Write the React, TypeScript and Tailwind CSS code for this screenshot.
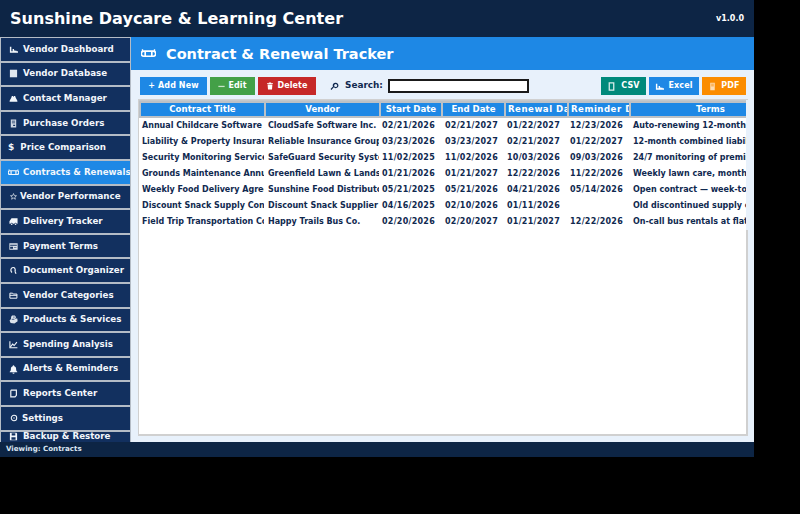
import type { ReactNode } from "react";

function Svg({ w = 9, h = 9, c = "", children }: { w?: number; h?: number; c?: string; children: ReactNode }) {
  return (
    <svg viewBox="0 0 10 10" width={w} height={h} className={`shrink-0 ${c}`} fill="currentColor" stroke="none">
      {children}
    </svg>
  );
}

const Chart = (p: { w?: number; h?: number }) => (
  <Svg {...p}><path d="M1 2h1.6v5H4V4.5h1.6V6H7V6.5h1.5V7H10v1.6H1z" /></Svg>
);
const Square = () => (
  <Svg><rect x="1" y="0.8" width="8" height="8.4" opacity="0.92" /></Svg>
);
const People = () => (
  <Svg><path d="M3.2 2.2h1.2l.6 1 .6-1h1.2l.7 2 1.8 3.3V8.6H.7V7.500L2.500 4.2z" /></Svg>
);
const Receipt = () => (
  <Svg><path fillRule="evenodd" opacity="0.85" d="M2 .5h6v9H2zM3.200 2v.8h3.600V2zM3.200 4v.8h3.600V4zM4.600 6.400v1.400h2.200V6.400z" /></Svg>
);
const Scroll = ({ w = 10, h = 10 }: { w?: number; h?: number }) => (
  <Svg w={w} h={h}>
    <path fill="none" stroke="currentColor" strokeWidth="1.100" d="M1.900 3.400h6.200a1.500 1.500 0 0 1 0 3.400H1.900a1.500 1.500 0 0 1 0-3.400zM2.800 3.400v3.400M7.200 3.400v3.400" />
    <path fill="none" stroke="currentColor" strokeWidth="0.900" d="M1 3.400V2.200M9 3.400V2.200" />
  </Svg>
);
const Star = () => (
  <Svg w={7} h={7}><path fill="none" stroke="currentColor" strokeWidth="1.100" opacity="0.85" d="M5 .8l1.200 2.900 3.100.2-2.400 2 .8 3L5 7.300 2.300 8.900l.8-3-2.400-2 3.100-.2z" /></Svg>
);
const Truck = () => (
  <Svg><path d="M2.800 1.500H9.500v6H8.500a1.200 1.200 0 0 0-2.400 0H4.200a1.200 1.200 0 0 0-2.400 0H.5V4.800z" /><circle cx="3" cy="8" r="0.9" /><circle cx="7.300" cy="8" r="0.9" /></Svg>
);
const Card = () => (
  <Svg><path fillRule="evenodd" opacity="0.9" d="M.4 1.500h9.200v7H.4zM1.300 3v1.200h7.400V3zM1.300 5.300v2.300h3.200V5.300zM5.500 6v.8h2.800V6z" /></Svg>
);
const Clip = () => (
  <Svg><path fill="none" stroke="currentColor" strokeWidth="1.300" d="M3.300 7.200C1.800 5.700 1.700 3.600 2.900 2.400c1.100-1.100 2.800-.9 3.600.3.700 1.200.6 2.500 0 3.200M6.600 5.900L7.800 8.500" /></Svg>
);
const Folder = () => (
  <Svg><path fill="none" stroke="currentColor" strokeWidth="1.100" d="M1 2.400h3l.8 1h4v4.600H1zM1 4.800h8" /></Svg>
);
const Box = () => (
  <Svg><path d="M3.400.6h3L8 2.500 6.400 4h2.800L9.600 7 6 9.400 1.800 9 .6 6.200 2.200 4.400 2.400 2z" opacity="0.9" /><path d="M3 4.800h3" stroke="#12305f" strokeWidth="0.800" /><path d="M5.500 1.500v2" stroke="#12305f" strokeWidth="0.700" /></Svg>
);
const Trend = () => (
  <Svg><path fill="none" stroke="currentColor" strokeWidth="1.200" d="M1 1.500V8.600H9.300M1.800 7.500L4 4.600l1.700 1.500L8.800 2.300" /></Svg>
);
const Bell = () => (
  <Svg><path d="M5 .4c.6 0 .9.400.9 1 1.500.4 2 1.600 2 3 0 1.500.5 2.400 1.300 3.100V8H.8v-.5C1.600 6.800 2.100 5.900 2.100 4.400c0-1.400.500-2.600 2-3 0-.6.300-1 .9-1zM3.800 8.500h2.400A1.200 1.200 0 0 1 3.800 8.500z" /></Svg>
);
const Report = () => (
  <Svg><path fill="none" stroke="currentColor" strokeWidth="1.300" d="M2 1.300h6.200v1.400M2 1.300v7.400h4.700L8.200 7V2.800" /></Svg>
);
const Gear = () => (
  <Svg w={8} h={8}><circle cx="5" cy="5" r="3.400" fill="none" stroke="currentColor" strokeWidth="1.300" /><circle cx="5" cy="5" r="1" opacity="0.8" /></Svg>
);
const Floppy = () => (
  <Svg><path fillRule="evenodd" d="M1 .8h7.200L9 1.600v7.600H1zM3 1.500v2.500h4V1.500zM2.700 5.800v2.800h4.600V5.800z" /></Svg>
);
const Lens = () => (
  <Svg w={9} h={9}><path fillRule="evenodd" d="M6.300.8a3 3 0 1 1-2.100 5.100L1.600 8.800.6 7.900 3.300 5A3 3 0 0 1 6.300.8zm0 1.300a1.700 1.700 0 1 0 0 3.400 1.700 1.700 0 0 0 0-3.400z" /></Svg>
);
const Trash = () => (
  <Svg w={8} h={8}><path d="M3.700.6h2.600l.4.900h2v1H1.300v-1h2zM2 3.200h6l-.5 6.200H2.500z" /></Svg>
);
const Minus = () => (
  <Svg w={7} h={7}><path d="M.5 4h9v1.800h-9z" opacity="0.7" /></Svg>
);
const Doc = () => (
  <Svg><path fill="none" stroke="currentColor" strokeWidth="1.400" opacity="0.85" d="M2.500 1h5v8h-5z" /></Svg>
);
const Pdf = () => (
  <Svg><path fillRule="evenodd" opacity="0.7" d="M2.500.7h5v8.600h-5zM3.500 2v.8h3V2zM3.500 4v.8h3V4z" /></Svg>
);

const nav: [ReactNode, string][] = [
  [<Chart />, "Vendor Dashboard"],
  [<Square />, "Vendor Database"],
  [<People />, "Contact Manager"],
  [<Receipt />, "Purchase Orders"],
  [null, "Price Comparison"],
  [<Scroll w={11} h={11} />, "Contracts & Renewals"],
  [<Star />, "Vendor Performance"],
  [<Truck />, "Delivery Tracker"],
  [<Card />, "Payment Terms"],
  [<Clip />, "Document Organizer"],
  [<Folder />, "Vendor Categories"],
  [<Box />, "Products & Services"],
  [<Trend />, "Spending Analysis"],
  [<Bell />, "Alerts & Reminders"],
  [<Report />, "Reports Center"],
  [<Gear />, "Settings"],
  [<Floppy />, "Backup & Restore"],
];

const rows = [
  ["Annual Childcare Software", "CloudSafe Software Inc.", "02/21/2026", "02/21/2027", "01/22/2027", "12/23/2026", "Auto-renewing 12-month subscription"],
  ["Liability & Property Insurance", "Reliable Insurance Group", "03/23/2026", "03/23/2027", "02/21/2027", "01/22/2027", "12-month combined liability policy"],
  ["Security Monitoring Service", "SafeGuard Security Systems", "11/02/2025", "11/02/2026", "10/03/2026", "09/03/2026", "24/7 monitoring of premises"],
  ["Grounds Maintenance Annual", "Greenfield Lawn & Landscaping", "01/21/2026", "01/21/2027", "12/22/2026", "11/22/2026", "Weekly lawn care, monthly trim"],
  ["Weekly Food Delivery Agreement", "Sunshine Food Distributors", "05/21/2025", "05/21/2026", "04/21/2026", "05/14/2026", "Open contract — week-to-week"],
  ["Discount Snack Supply Contract", "Discount Snack Supplier", "04/16/2025", "02/10/2026", "01/11/2026", "", "Old discontinued supply contract"],
  ["Field Trip Transportation Contract", "Happy Trails Bus Co.", "02/20/2026", "02/20/2027", "01/21/2027", "12/22/2026", "On-call bus rentals at flat rate"],
];

const cols = [
  ["Contract Title", 127, 3],
  ["Vendor", 115, 2],
  ["Start Date", 62, 1],
  ["End Date", 63, 2],
  ["Renewal Date", 63, 1],
  ["Reminder Date", 62, 1],
  ["Terms", 161, 2],
] as const;

const btn = "h-full flex items-center justify-center gap-[3px] text-[8px] tracking-[0.1px]";

export default function App() {
  return (
    <div className="min-h-screen bg-black">
      <div className="w-[754px] h-[457px] flex flex-col bg-[#e8f1fb] font-['DejaVu_Sans',sans-serif] font-bold overflow-hidden">
        <header className="h-[37px] shrink-0 bg-[#0d2545] text-white flex items-center justify-between px-[10px]">
          <span className="text-[16px] tracking-[0.03px]">Sunshine Daycare &amp; Learning Center</span>
          <span className="text-[8px]">v1.0.0</span>
        </header>
        <div className="flex-1 flex min-h-0">
          <nav className="w-[131px] shrink-0 flex flex-col overflow-hidden">
            {nav.map(([icon, label], i) => (
              <div
                key={label}
                className={`${i === 16 ? "h-[12px]" : "h-[24.6px]"} shrink-0 flex items-center border border-[#b4bcc6] whitespace-nowrap text-[8.7px] text-[#f2f6fb] overflow-hidden ${i === 5 ? "bg-[#1e88e5]" : "bg-[#12305f]"}`}
              >
                {icon === null ? (
                  <span className="ml-[7px] mr-[6px] text-[9px]">$</span>
                ) : (
                  <span className="w-[22px] flex justify-center pl-[3px] shrink-0">{icon}</span>
                )}
                <span className={i === 6 ? "-ml-[3px]" : i === 15 ? "-ml-[1px]" : ""}>{label}</span>
              </div>
            ))}
          </nav>
          <main className="flex-1 min-w-0 flex flex-col">
            <div className="h-[33px] shrink-0 bg-[#1e88e5] text-white flex items-center pl-[10px] text-[14.5px]">
              <span className="w-[25px] flex"><Scroll w={15} h={15} /></span>
              <span className="translate-y-[0.5px]">Contract &amp; Renewal Tracker</span>
            </div>
            <div className="flex items-center h-[18px] mt-[7px] ml-[9px] mr-[8px] text-white">
              <div className={`${btn} w-[67px] mr-[3px] bg-[#1e88e5]`}>+ Add New</div>
              <div className={`${btn} w-[45px] mr-[3px] bg-[#43a047]`}><Minus /> Edit</div>
              <div className={`${btn} w-[58px] bg-[#c62828]`}><Trash /> Delete</div>
              <span className="ml-[14px] text-[#10294f]"><Lens /></span>
              <span className="ml-[6px] text-[#10294f] text-[8.9px]">Search:</span>
              <div className="ml-[5px] w-[141px] h-[14px] bg-white border-2 border-[#1a1a1a]" />
              <div className={`${btn} ml-auto gap-[5px] w-[45px] mr-[3px] bg-[#00897b]`}><Doc /> CSV</div>
              <div className={`${btn} gap-[4px] w-[50px] mr-[3px] bg-[#1e88e5]`}><Chart /> Excel</div>
              <div className={`${btn} gap-[4px] w-[44px] bg-[#fb8c00]`}><Pdf /> PDF</div>
            </div>
            <div className="mt-[4px] ml-[7px] w-[610px] h-[337px] bg-white border-l border-t border-r-2 border-b-2 border-[#d0d0d0]">
              <div className="-mr-[2px] h-[130px] border-r-2 border-[#e8f1fb] overflow-hidden bg-white">
                <div className="flex w-[700px] border-t border-[#c4c8cc]">
                  {cols.map(([name, w], i) => (
                    <div
                      key={name}
                      style={{ width: w }}
                      className={`shrink-0 h-[17px] border-y-2 border-r-2 ${i === 0 ? "border-l-2" : ""} border-[#bcc1c6] bg-[#1e88e5] text-white text-[8.6px] flex items-center ${i === 4 || i === 5 ? "justify-start pl-[2px] tracking-[0.5px]" : "justify-center"} overflow-hidden whitespace-nowrap`}
                    >
                      {name}
                    </div>
                  ))}
                </div>
                {rows.map((r) => (
                  <div key={r[0]} className="flex w-[700px] h-[16px] items-center text-[8px] text-[#10294f]">
                    {r.map((c, i) => (
                      <div
                        key={i}
                        style={{ width: cols[i][1], paddingLeft: cols[i][2] }}
                        className={`shrink-0 overflow-hidden whitespace-nowrap border-r-2 border-transparent ${i >= 2 && i <= 5 ? "tracking-[0.26px]" : ""}`}
                      >
                        {c}
                      </div>
                    ))}
                  </div>
                ))}
              </div>
            </div>
          </main>
        </div>
        <footer className="h-[15px] shrink-0 bg-[#0d2545] text-[#dbe6f2] text-[7.1px] flex items-center pl-[6px]">Viewing: Contracts</footer>
      </div>
    </div>
  );
}
